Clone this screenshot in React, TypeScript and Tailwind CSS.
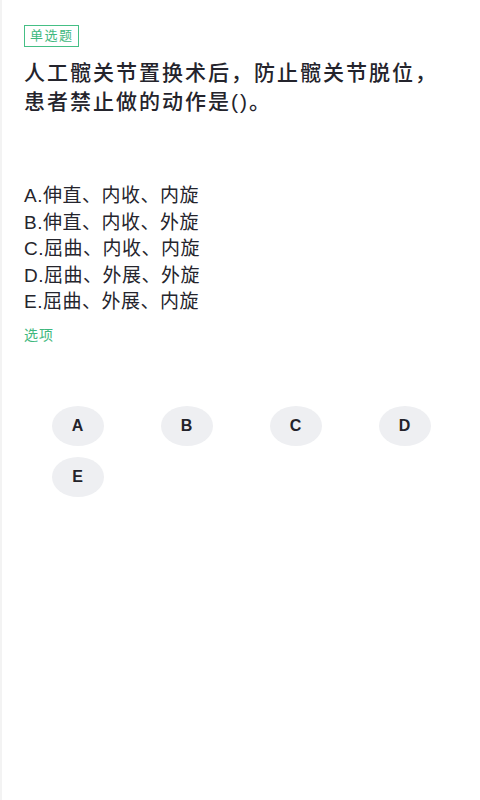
import React from "react";

const options = [
  "A.伸直、内收、内旋",
  "B.伸直、内收、外旋",
  "C.屈曲、内收、内旋",
  "D.屈曲、外展、外旋",
  "E.屈曲、外展、内旋",
];

const letters = ["A", "B", "C", "D", "E"];

const App = () => {
  return (
    <div
      className="min-h-[800px] w-[480px] bg-white border-l-2 border-[#f3f3f3]"
      style={{ fontFamily: '"Liberation Sans", "Noto Sans CJK SC", sans-serif' }}
    >
      <div className="pt-[25px] px-[22px]">
        <div className="w-fit border-[1.5px] border-[#45bf85] text-[#3fb87e] text-[13px] leading-[20px] tracking-[1.5px] pl-[5px] pr-[4px]">
          单选题
        </div>
        <h1 className="mt-[11px] text-[21px] leading-[29px] tracking-[2px] font-medium text-[#24242c]">
          人工髋关节置换术后，防止髋关节脱位，患者禁止做的动作是()。
        </h1>
      </div>

      <ul className="mt-[67px] px-[22px]">
        {options.map((opt) => (
          <li
            key={opt}
            className="text-[19px] leading-[26.5px] tracking-[0.5px] text-[#25252d]"
          >
            {opt}
          </li>
        ))}
      </ul>

      <p className="mt-[9px] px-[22px] text-[14px] leading-[20px] tracking-[1px] text-[#3fb87e]">
        选项
      </p>

      <div className="mt-[61px] px-[21px] grid grid-cols-4 gap-y-[11px]">
        {letters.map((l) => (
          <div key={l} className="flex justify-center">
            <button className="w-[52px] h-[40px] rounded-[50%] bg-[#eeeff2] text-[16px] font-bold text-[#23232a]">
              {l}
            </button>
          </div>
        ))}
      </div>
    </div>
  );
};

export default App;
